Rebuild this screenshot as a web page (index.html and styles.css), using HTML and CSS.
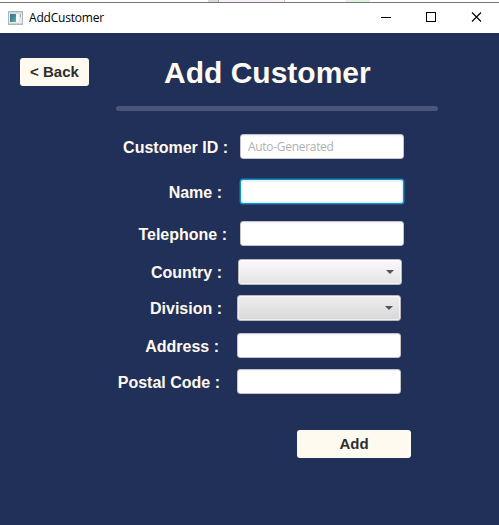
FILE: index.html
```html
<!DOCTYPE html>
<html lang="en">
<head>
<meta charset="utf-8">
<title>AddCustomer</title>
<link rel="stylesheet" href="styles.css">
</head>
<body>
<div class="behind"><i class="tab-a"></i><i class="tab-b"></i><i class="tab-c"></i></div>
<header class="titlebar">
  <svg class="app-icon" width="15" height="14" viewBox="0 0 15 14">
    <defs><linearGradient id="pane" x1="0" y1="0" x2="1" y2="1"><stop offset="0" stop-color="#3c7195"/><stop offset=".55" stop-color="#408f9b"/><stop offset="1" stop-color="#6db98b"/></linearGradient></defs>
    <rect x=".5" y=".5" width="14" height="13" fill="#e9ebee" stroke="#b0b5bc"/>
    <rect x="1" y="1" width="13" height="1.5" fill="#d2d6dc"/>
    <rect x="2" y="3" width="6" height="8" fill="url(#pane)"/>
    <rect x="8" y="3" width="3" height="8" fill="#f8f9fa"/>
    <rect x="11" y="3" width="2" height="8" fill="#e2e7ef"/>
    <rect x="12" y="3" width="1" height="3" fill="#91b5bc"/>
    <rect x="1" y="12" width="13" height="1" fill="#d0d3d8"/>
  </svg>
  <span class="caption">AddCustomer</span>
  <div class="controls">
    <svg width="45" height="30" viewBox="0 0 45 30"><path d="M18 14.500h10" stroke="#000"/></svg>
    <svg width="46" height="30" viewBox="0 0 46 30"><rect x="18.500" y="9.500" width="9" height="9" fill="none" stroke="#000"/></svg>
    <svg width="45" height="30" viewBox="0 0 45 30"><path d="M18 9.500l9 9M27 9.500l-9 9" stroke="#000" stroke-width="1.100"/></svg>
  </div>
</header>
<main>
  <div class="heading">
    <button class="btn back">&lt; Back</button>
    <h1>Add Customer</h1>
  </div>
  <div class="rule"></div>
  <form>
    <div class="row id"><label>Customer ID :</label><input placeholder="Auto-Generated"></div>
    <div class="row name"><label>Name :</label><input class="focused"></div>
    <div class="row phone"><label>Telephone :</label><input></div>
    <div class="row country"><label>Country :</label><div class="combo"><svg width="8" height="4" viewBox="0 0 8 4"><path d="M0 0h8L4 4z" fill="#555"/></svg></div></div>
    <div class="row division"><label>Division :</label><div class="combo pressed"><svg width="8" height="4" viewBox="0 0 8 4"><path d="M0 0h8L4 4z" fill="#555"/></svg></div></div>
    <div class="row address"><label>Address :</label><input></div>
    <div class="row postal"><label>Postal Code :</label><input></div>
    <button type="button" class="btn add">Add</button>
  </form>
</main>
</body>
</html>
```
FILE: styles.css
```css
* { box-sizing: border-box; }
body {
  margin: 0;
  width: 499px;
  height: 525px;
  overflow: hidden;
  background: #213058;
  font-family: "Liberation Sans", Arial, sans-serif;
}
.behind {
  display: flex;
  height: 3px;
  padding-left: 208px;
  background: #fff;
  border-bottom: 1px solid #747477;
}
.tab-a { width: 11px; background: #dcd9dc; border-right: 1px solid #aaa6aa; }
.tab-b { width: 66px; background: #f7f0f6; border-right: 1px solid #ccc6cc; }
.tab-c { width: 24px; margin-left: 61px; background: #dcf3dc; }
.titlebar {
  display: flex;
  align-items: center;
  height: 30px;
  padding-left: 8px;
  background: #fff;
}
.caption {
  margin-left: 6px;
  font: 12px/16px "Open Sans", "Noto Sans", sans-serif;
  letter-spacing: -.2px;
  color: #000;
}
.controls { display: flex; height: 30px; margin-left: auto; }
.heading { display: flex; height: 73px; padding: 25px 0 0 20px; }
.btn {
  height: 28px;
  padding: 0;
  border: 0;
  border-radius: 3px;
  background: #fffaf0;
  color: #2d2d2d;
  font: bold 15px/28px "Liberation Sans", Arial, sans-serif;
}
.back { width: 69px; }
h1 {
  margin: -3px 0 0 75px;
  font-size: 30px;
  line-height: 36px;
  color: #fffaf0;
  white-space: nowrap;
}
.rule {
  width: 322px;
  height: 5px;
  margin-left: 116px;
  border-radius: 3px;
  background: #4b5579;
}
form { padding-top: 23px; }
.row { display: flex; height: 25px; }
label {
  width: 240px;
  padding-right: 12px;
  text-align: right;
  white-space: nowrap;
  color: #fffaf0;
  font-weight: bold;
  font-size: 16px;
  line-height: 28px;
}
.name { margin-top: 20px; }
.name label { padding-right: 18px; }
.phone { margin-top: 17px; }
.phone label { padding-right: 13px; }
.country { height: 26px; margin-top: 13px; }
.country label { width: 238px; padding-right: 16px; }
.division { height: 26px; margin-top: 10px; }
.division label { width: 237px; padding-right: 15px; }
.address { margin-top: 12px; }
.address label { width: 237px; padding-right: 18px; }
.postal { margin-top: 11px; }
.postal label { width: 237px; padding-right: 17px; }
input {
  width: 164px;
  height: 25px;
  margin: 0;
  padding: 0 7px;
  border: 1px solid #c3c3c8;
  border-radius: 3px;
  outline: 0;
  background: linear-gradient(#f3f3f3, #fff 2px);
  font: 12px "Open Sans", "Noto Sans", sans-serif;
  letter-spacing: -.3px;
}
input::placeholder { color: #b0b0b0; opacity: 1; }
.focused {
  border-color: #1591c0;
  background: #fff;
  box-shadow: 0 0 0 .5px #1682b3, inset 0 0 0 1.5px #def0fa;
}
.combo {
  display: flex;
  align-items: center;
  justify-content: flex-end;
  width: 164px;
  height: 26px;
  padding-right: 7px;
  border: 1px solid #b8b8bc;
  border-radius: 3px;
  background: linear-gradient(#fbf8fb, #f0eef0 50%, #e2e3e2);
  box-shadow: inset 0 0 0 1px rgba(255, 255, 255, .6);
}
.pressed {
  background: linear-gradient(#efedef, #e4e2e4 50%, #d8d8d8);
}
.add { display: block; width: 114px; margin: 36px 0 0 297px; }
```
